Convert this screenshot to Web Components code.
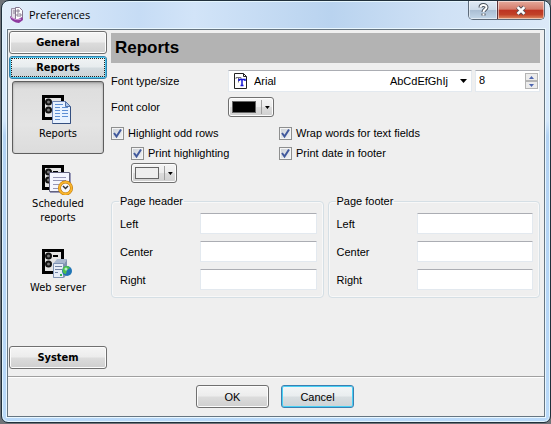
<!DOCTYPE html>
<html lang="en">
<head>
<meta charset="utf-8">
<title>Preferences</title>
<style>
html,body{margin:0;min-height:100%}
body{background:#6f7378;font:11px/14px "Liberation Sans",Arial,sans-serif;color:#000}
</style>
</head>
<body>
<pref-window heading="Preferences">
  <nav-sidebar slot="side">
    <nav-button>General</nav-button>
    <nav-button active>Reports</nav-button>
    <nav-item icon="doc" active>Reports</nav-item>
    <nav-item icon="clock">Scheduled<br>reports</nav-item>
    <nav-item icon="server">Web server</nav-item>
    <nav-button last>System</nav-button>
  </nav-sidebar>
  <report-page></report-page>
  <dialog-button slot="actions">OK</dialog-button>
  <dialog-button slot="actions" focused>Cancel</dialog-button>
</pref-window>
<script>
const define = (name, html, init) => {
  const t = document.createElement('template');
  t.innerHTML = '<style>*{box-sizing:border-box}button,input,select{font:inherit;color:inherit;margin:0}</style>' + html;
  customElements.define(name, class extends HTMLElement {
    constructor() {
      super();
      this.attachShadow({mode: 'open'}).append(t.content.cloneNode(true));
    }
    connectedCallback() { if (init) init(this, this.shadowRoot); }
  });
};

define('pref-window', `
<style>
:host{display:flex;flex-direction:column;box-sizing:border-box;min-height:calc(100vh - 1px);margin:0 0 1px 1px;border:1px solid #20303c;border-radius:8px 8px 7px 7px;padding:0 5px 5px;box-shadow:inset 0 0 0 1px #e4f5fd;
background:linear-gradient(90deg,#e3effb,#c6dcf5 25%,#d2e4f8 35%,#b9d3ef 60%,#cfe1f5 80%,#dbe9f8) 0 0/100% 29px no-repeat,linear-gradient(#dbeafa,#d4e7fb 120px,#b3d2f3 135px,#b9d9f9)}
header{display:flex;height:28px;align-items:flex-start}
h1{flex:1;margin:0;font:11px/18px "Open Sans","Noto Sans",sans-serif;padding:5px 0 0 4px}
.logo{margin:6px 0 0 2px}
.caps{display:flex;height:19px;border:1px solid #5d6b7a;border-top:0;border-radius:0 0 5px 5px;overflow:hidden}
.caps button{border:0;padding:0;width:28px;display:flex;justify-content:center;align-items:center;background:linear-gradient(#e1eaf4,#cddae8 48%,#a9bdd2 50%,#c3d7e9);box-shadow:inset 0 0 0 1px #ffffff80}
.caps .x{width:47px;border-left:1px solid #5b3238;background:linear-gradient(#e5aa9c,#d47b6a 46%,#bd3321 50%,#c14127 75%,#df8e64)}
main{flex:1;display:flex;flex-direction:column;border:1px solid #667581;box-shadow:0 0 0 1px #e9f7ff;background:#efefef}
.body{flex:1;display:flex;gap:4px;padding:1px 4px 7px 1px}
::slotted(report-page){flex:1;min-width:0}
footer{border-top:1px solid #a0a0a0;box-shadow:inset 0 1px #fff;padding:8px 2px 8px 0;display:flex;justify-content:center;gap:12px}
</style>
<header>
<svg class="logo" width="16" height="17" viewBox="0 0 16 17"><path d="M2.500 1.500h7v11h-7z" fill="#e5dfe9" stroke="#9a8fa5"/><path d="M6.500.500h4l3 3v9h-7z" fill="#fff" stroke="#85778f"/><path d="M4 4h2M4 6h2M8 3h2v2H8zM8 7h4v2H8z" fill="none" stroke="#8b7f92"/><path d="M1 9l3 2c4 2 6 1 9-1l1 3-4 3C6 16 1 13 1 9z" fill="#8e3aa0"/><path d="M2 10c4 3 7 3 10 2" stroke="#d9a6df" fill="none"/></svg>
<h1></h1>
<div class="caps">
<button aria-label="Help"><svg width="11" height="14" viewBox="0 0 11 14"><path d="M2.500 4.500C2.500 1.300 8.500 1.300 8.500 4.300c0 2.200-3 2-3 4.700M5.500 10.500v2" fill="none" stroke="#4b535d" stroke-width="4"/><path d="M2.500 4.500C2.500 1.300 8.500 1.300 8.500 4.300c0 2.200-3 2-3 4.700M5.500 10.500v2" fill="none" stroke="#fff" stroke-width="2"/></svg></button>
<button class="x" aria-label="Close"><svg width="12" height="11" viewBox="0 0 14 12"><path d="M3 2l8 8M11 2l-8 8" stroke="#5b5158" stroke-width="5"/><path d="M3 2l8 8M11 2l-8 8" stroke="#fff" stroke-width="3"/></svg></button>
</div>
</header>
<main><div class="body"><slot name="side"></slot><slot></slot></div><footer><slot name="actions"></slot></footer></main>`,
(el, r) => { r.querySelector('h1').textContent = el.getAttribute('heading'); });

define('nav-sidebar', `
<style>:host{display:flex;flex-direction:column;width:98px;flex:none;gap:2px}</style><slot></slot>`);

const face = 'background:linear-gradient(#f5f5f5,#ececec 48%,#dcdcdc 52%,#cfcfcf);border:1px solid #707070;border-radius:3px;box-shadow:inset 0 0 0 1px #fcfcfc';

define('nav-button', `
<style>
:host{display:block}
:host([last]){margin-top:auto}
button{display:block;width:100%;height:23px;padding:0;font:bold 11px/14px "DejaVu Sans Condensed","DejaVu Sans",sans-serif;${face}}
:host([active]) button{border-color:#3483ae;box-shadow:inset 0 0 0 1px #4bc5ec;outline:1px dotted #222;outline-offset:-3px;background:linear-gradient(#f1f4f5,#e7ecee 48%,#d4dce0 52%,#cbd2d5)}
</style><button><slot></slot></button>`);

const cabinet = '<path d="M1.500 1.500h19v22h-19z" fill="#e4e4e4" stroke="#000" stroke-width="3"/><circle cx="6.500" cy="7" r="3.500" fill="#111"/><circle cx="6.500" cy="15" r="3.500" fill="#111"/><circle cx="6.500" cy="7" r="1.500" fill="#777"/><circle cx="6.500" cy="15" r="1.500" fill="#777"/><path d="M11 7h5" stroke="#000" stroke-width="2"/>';
const icons = {
  doc: cabinet + '<path d="M10.500 6.500h13l5 5v17h-18z" fill="#e8f2ff" stroke="#7186b4"/><path d="M10.500 28.500h18v-17" fill="none" stroke="#344f80"/><path d="M23.500 6.500v5h5z" fill="#a9c6ec" stroke="#526fa5"/><path d="M13 9.500h8M13 12.500h5M20 12.500h6M13 15.500h5M20 15.500h6M13 18.500h5M20 18.500h6M13 21.500h5M20 21.500h6M13 24.500h5" stroke="#5e8fd4"/>',
  clock: cabinet + '<path d="M7.500 7.500h20v19h-20z" fill="#f4f5ff" stroke="#62627e"/><path d="M8 27.500h20.500V8" fill="none" stroke="#9898b8"/><path d="M11 12.500h13M11 15.500h13M11 19.500h6M11 23.500h5" stroke="#9494b6"/><circle cx="23.500" cy="23" r="6" fill="#f5f7fc" stroke="#b66d00" stroke-width="3"/><circle cx="23.500" cy="23" r="6" fill="none" stroke="#f8b52d" stroke-width="2"/><path d="M21 21l2.500 2.500L26 21" fill="none" stroke="#333" stroke-width="1.500"/>',
  server: cabinet + '<path d="M11 15l4-5h10l-3 5v14H11z" fill="#a9b8cf"/><path d="M22 15l3-5v15l-3 4z" fill="#8092b1"/><path d="M11.500 14.500h10v14h-10z" fill="#e6edf8" stroke="#7f93b4"/><path d="M13 17.500h7M13 20.500h7M13 23.500h3" stroke="#7183a3"/><path d="M18 25h2v2h-2z" fill="#35b64b"/><circle cx="25" cy="22" r="5" fill="#2075b5"/><path d="M21 19c2-3 6-2 7 0l-3 2-1 4c-3 0-4-3-3-6z" fill="#4dc04b"/><circle cx="24" cy="20" r="1.500" fill="#b6ecc9"/>'
};
define('nav-item', `
<style>
:host{display:block;padding:0 3px;margin-bottom:3px}
:host([active]){margin:0 0 1px}
button{display:flex;flex-direction:column;align-items:center;width:100%;height:73px;padding:13px 0 0;border:1px solid transparent;border-radius:3px;background:none;font:11px/14px "DejaVu Sans Condensed","DejaVu Sans",sans-serif;gap:2px}
:host([active]) button{border-color:#5e5e5e;background:linear-gradient(#c3c3c3,#dedede 10%,#e4e4e4 60%,#dcdcdc);box-shadow:inset 0 1px 2px #999}
:host([icon=clock]) button{padding-top:7px}
svg{flex:none}
</style><button><svg width="32" height="30" viewBox="0 0 32 30"></svg><span><slot></slot></span></button>`,
(el, r) => { r.querySelector('svg').innerHTML = icons[el.getAttribute('icon')]; });

define('dialog-button', `
<style>
:host{display:block}
button{width:73px;height:23px;padding:0;${face}}
:host([focused]) button{border-color:#3c7fb1;box-shadow:inset 0 0 0 1px #48d0f5;background:linear-gradient(#f3f6f7,#e9edef 48%,#d8dee1 52%,#cdd3d6)}
</style><button><slot></slot></button>`);

define('check-box', `
<style>
:host{display:block}
label{display:flex;align-items:center;gap:4px;height:20px;white-space:nowrap}
input{appearance:none;width:13px;height:13px;border:1px solid #8e8f8f;background:linear-gradient(135deg,#cbd0d6,#f3f4f6);box-shadow:inset 0 0 0 1px #f4f4f4}
.box{display:grid;flex:none}
.box>*{grid-area:1/1}
svg{pointer-events:none;z-index:1}
input:not(:checked)+svg{display:none}
</style><label><span class="box"><input type="checkbox" checked><svg width="13" height="13" viewBox="0 0 13 13"><path d="M3 6l2.500 3.500L10 2.500" fill="none" stroke="#41599c" stroke-width="2"/></svg></span><span><slot></slot></span></label>`);

define('color-button', `
<style>
:host{display:block}
button{display:flex;align-items:center;width:46px;height:20px;padding:0 3px;${face}}
.chip{width:25px;height:12px;border:1px solid #666;background:var(--chip)}
.bar{width:1px;height:14px;background:#a0a0a0;margin:0 3px 0 5px}
</style><button><span class="chip"></span><span class="bar"></span><svg width="5" height="3" viewBox="0 0 5 3"><path d="M0 0h5L2.500 3z"/></svg></button>`,
(el, r) => { r.querySelector('button').setAttribute('aria-label', el.getAttribute('label')); });

define('font-picker', `
<style>
:host{display:grid;grid-template-columns:117px 1fr 65px;align-items:center}
.combo{display:grid;align-items:center;margin-right:3px}
.combo>*{grid-area:1/1}
select{appearance:none;width:100%;height:22px;border:1px solid #e3e9ef;border-top-color:#abadb3;border-radius:0;background:#fff;padding:0 0 0 25px}
.page{margin-left:6px;pointer-events:none}
.sample{justify-self:end;margin-right:5px;display:flex;align-items:center;gap:12px;pointer-events:none}
.spin{display:flex;height:22px;background:#fff;border:1px solid #e3e9ef;border-top-color:#abadb3;padding:1px}
input{flex:1;min-width:0;border:0;padding:0 0 3px 2px;background:none;outline:0}
.arrows{display:flex;flex-direction:column;width:13px;justify-content:center}
.arrows button{height:8px;padding:0;border:1px solid #b4b4b4;background:#ececec;display:flex;justify-content:center;align-items:center}
</style>
<label for="f">Font type/size</label>
<div class="combo"><select id="f"><option>Arial</option></select>
<svg class="page" width="13" height="16" viewBox="0 0 13 16"><path d="M.500.500h9l3 3v12H.500z" fill="#fff" stroke="#222"/><path d="M9.500.500v3h3" fill="none" stroke="#222"/><path d="M2 6V4.500h5V6M4.500 4.500v5" fill="none" stroke="#777"/><path d="M5 8V6.500h6V8M8 6v6M6.500 12.500h3" fill="none" stroke="#1616d6" stroke-width="1.500"/></svg>
<span class="sample">AbCdEfGhIj<svg width="7" height="4" viewBox="0 0 7 4"><path d="M0 0h7L3.500 4z"/></svg></span></div>
<div class="spin"><input aria-label="Font size" value="8"><span class="arrows"><button aria-label="Increase"><svg width="5" height="3" viewBox="0 0 5 3"><path d="M0 3h5L2.500 0z" fill="#4d66b0"/></svg></button><button aria-label="Decrease"><svg width="5" height="3" viewBox="0 0 5 3"><path d="M0 0h5L2.500 3z" fill="#4d66b0"/></svg></button></span></div>`);

define('text-group', `
<style>
:host{display:block;min-width:0}
fieldset{margin:0;min-width:0;border:1px solid #d5dfe5;border-radius:4px;padding:5px 6px 7px 7px;box-shadow:inset 0 0 0 1px #f8f8f8}
legend{padding:0 1px;line-height:14px}
div{display:grid;grid-template-columns:80px 1fr;gap:7px 0;align-items:center;padding-left:1px}
input{width:100%;min-width:0;height:21px;border:1px solid #e3e9ef;border-top-color:#abadb3;background:#fff;border-radius:1px;padding:0 3px}
</style><fieldset><legend></legend><div>
<label for="a">Left</label><input id="a"><label for="b">Center</label><input id="b"><label for="c">Right</label><input id="c"></div></fieldset>`,
(el, r) => { r.querySelector('legend').textContent = el.getAttribute('legend'); });

define('report-page', `
<style>
:host{display:block;padding-top:2px}
h2{margin:0 0 7px;background:#b3b3b3;font:bold 17px/30px "Liberation Sans",Arial,sans-serif;padding-left:4px}
.color{display:flex;margin:5px 0 6px}
.color span{width:117px;line-height:20px}
.checks{display:grid;grid-template-columns:168px 1fr}
.in{padding-left:20px}
.groups{display:grid;grid-template-columns:1fr 1fr;gap:4px;margin-top:11px}
color-button{width:46px}
</style>
<h2>Reports</h2>
<font-picker></font-picker>
<div class="color"><span>Font color</span><color-button label="Font color" style="--chip:#000"></color-button></div>
<div class="checks"><check-box>Highlight odd rows</check-box><check-box>Wrap words for text fields</check-box><check-box class="in">Print highlighting</check-box><check-box>Print date in footer</check-box></div>
<div class="in"><color-button label="Highlight color" style="--chip:#eee"></color-button></div>
<div class="groups"><text-group legend="Page header"></text-group><text-group legend="Page footer"></text-group></div>`);
</script>
</body>
</html>
